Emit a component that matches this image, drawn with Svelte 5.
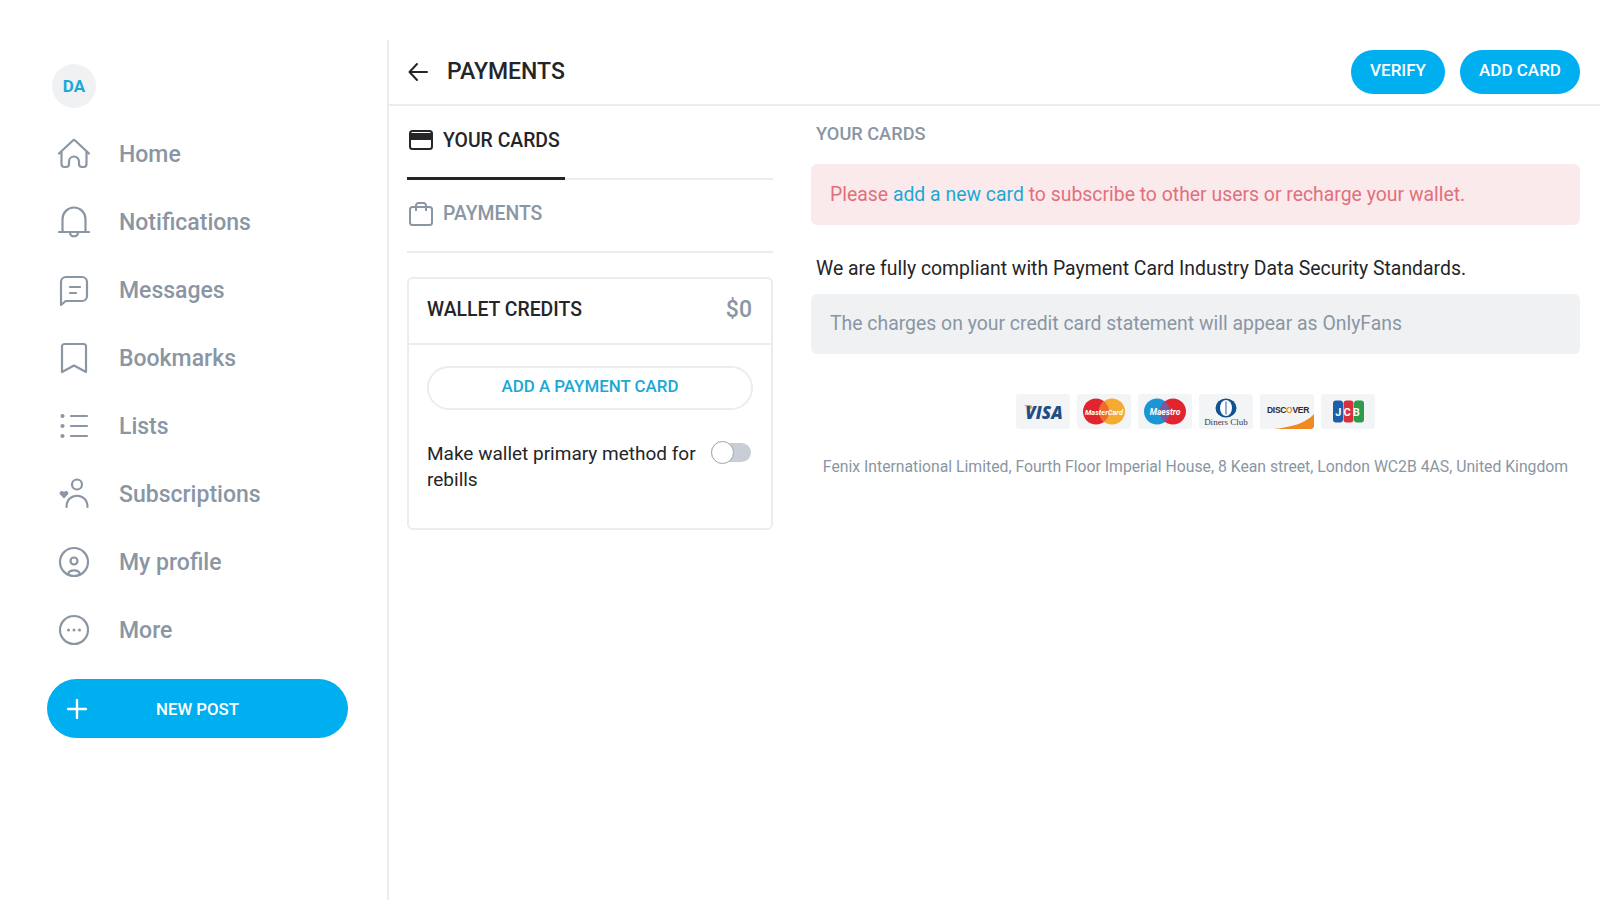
<script>
  const nav = [
    { label: 'Home', icon: 'home' },
    { label: 'Notifications', icon: 'bell' },
    { label: 'Messages', icon: 'msg' },
    { label: 'Bookmarks', icon: 'bookmark' },
    { label: 'Lists', icon: 'lists' },
    { label: 'Subscriptions', icon: 'subs' },
    { label: 'My profile', icon: 'profile' },
    { label: 'More', icon: 'more' }
  ]
  const footer = 'Fenix International Limited, Fourth Floor Imperial House, 8 Kean street, London WC2B 4AS, United Kingdom'
</script>

{#snippet navIcon(name)}
  <svg class="nav-icon" viewBox="0 0 32 32" fill="none" stroke="currentColor" stroke-width="2.2" stroke-linecap="round" stroke-linejoin="round">
    {#if name === 'home'}
      <path d="M1 15.5 15.2 2.2a1.2 1.2 0 0 1 1.6 0L31 15.5M3.5 13.5V26a3 3 0 0 0 3 3h1.5a3 3 0 0 0 3-3v-2.5a5 5 0 0 1 10 0V26a3 3 0 0 0 3 3h1.5a3 3 0 0 0 3-3V13.5" />
    {:else if name === 'bell'}
      <path d="M1 26h30M4.500 26V13a11.500 11.500 0 0 1 23 0v13M12 26.500c0 5 8 5 8 0" />
    {:else if name === 'msg'}
      <path d="M3 31V8a5 5 0 0 1 5-5h16a5 5 0 0 1 5 5v14a5 5 0 0 1-5 5H8.500a3 3 0 0 0-2.500 1.500ZM12 13h10M12 19h6" />
    {:else if name === 'bookmark'}
      <path d="M4 30V4.500A2.500 2.500 0 0 1 6.500 2h19A2.500 2.500 0 0 1 28 4.500V30L16 23.500Z" />
    {:else if name === 'lists'}
      <path d="M13 6h16M13 16h16M13 26h16" />
      <circle cx="4.500" cy="6" r="1" fill="currentColor" />
      <circle cx="4.500" cy="16" r="1" fill="currentColor" />
      <circle cx="4.500" cy="26" r="1" fill="currentColor" />
    {:else if name === 'subs'}
      <circle cx="19" cy="6.500" r="5" />
      <path d="M8.500 29c0-15 21-15 21 0" />
      <path d="M6 20.500 2.200 16.500c-2-2.300 1.600-5 3.800-2.500 2.200-2.500 5.800.2 3.800 2.500Z" fill="currentColor" stroke="none" />
    {:else if name === 'profile'}
      <circle cx="16" cy="16" r="14" />
      <circle cx="16" cy="15" r="3.500" />
      <path d="M10 28.500c1-5.500 11-5.500 12 0" />
    {:else}
      <circle cx="16" cy="16" r="14" />
      <circle cx="10.500" cy="16" r="1.500" fill="currentColor" stroke="none" />
      <circle cx="16" cy="16" r="1.500" fill="currentColor" stroke="none" />
      <circle cx="21.500" cy="16" r="1.500" fill="currentColor" stroke="none" />
    {/if}
  </svg>
{/snippet}

<div class="page">
  <aside class="sidebar">
    <div class="avatar">DA</div>
    <nav class="nav">
      {#each nav as item}
        <a class="nav-item" href="#top">
          {@render navIcon(item.icon)}
          <span>{item.label}</span>
        </a>
      {/each}
    </nav>
    <button class="new-post">
      <svg class="plus" viewBox="0 0 20 20" stroke="currentColor" stroke-width="2.400" stroke-linecap="round"><path d="M10 1v18M1 10h18" /></svg>
      <span>NEW POST</span>
    </button>
  </aside>

  <main class="main">
    <header class="topbar">
      <svg class="back" viewBox="0 0 20 20" fill="none" stroke="currentColor" stroke-width="2" stroke-linecap="round" stroke-linejoin="round"><path d="M19 10H1.500M9 2 1.500 10 9 18" /></svg>
      <h1>PAYMENTS</h1>
      <div class="actions">
        <button class="pill verify">VERIFY</button>
        <button class="pill add">ADD CARD</button>
      </div>
    </header>

    <div class="columns">
      <section class="left">
        <div class="tab active">
          <svg class="tab-icon" viewBox="0 0 24 20" fill="none" stroke="currentColor" stroke-width="2"><rect x="1" y="1" width="22" height="18" rx="2.500" /><rect x="1" y="4" width="22" height="5" fill="currentColor" /></svg>
          <span>YOUR CARDS</span>
        </div>
        <div class="tab">
          <svg class="tab-icon" viewBox="0 0 24 24" fill="none" stroke="currentColor" stroke-width="2"><rect x="1" y="5" width="22" height="18" rx="2.500" /><path d="M7 9V3.500A2.500 2.500 0 0 1 9.500 1h5A2.500 2.500 0 0 1 17 3.500V9" /></svg>
          <span>PAYMENTS</span>
        </div>

        <div class="wallet">
          <div class="wallet-head">
            <strong>WALLET CREDITS</strong>
            <span class="amount">$0</span>
          </div>
          <div class="wallet-body">
            <button class="outline">ADD A PAYMENT CARD</button>
            <div class="primary">
              <p>Make wallet primary method for rebills</p>
              <span class="toggle"><span class="knob"></span></span>
            </div>
          </div>
        </div>
      </section>

      <section class="right">
        <h2>YOUR CARDS</h2>
        <div class="alert">Please <a href="#top">add a new card</a> to subscribe to other users or recharge your wallet.</div>
        <p class="compliant">We are fully compliant with Payment Card Industry Data Security Standards.</p>
        <div class="note">The charges on your credit card statement will appear as OnlyFans</div>

        <div class="cards">
          <div class="card-logo">
            <svg viewBox="0 0 54 34">
              <path d="M8 10.500h7l2 3-3 1Z" fill="#e8a33a" />
              <text x="28" y="24" text-anchor="middle" class="visa">VISA</text>
            </svg>
          </div>
          <div class="card-logo">
            <svg viewBox="0 0 54 34">
              <circle cx="19" cy="17" r="13" fill="#e0252f" />
              <circle cx="35" cy="17" r="13" fill="#f4ab32" />
              <path d="M27 6.800a13 13 0 0 1 0 20.400 13 13 0 0 1 0-20.400Z" fill="#ee6b2c" />
              <text x="27" y="20" text-anchor="middle" class="mc small">MasterCard</text>
            </svg>
          </div>
          <div class="card-logo">
            <svg viewBox="0 0 54 34">
              <circle cx="19" cy="17" r="13" fill="#1b96d4" />
              <circle cx="35" cy="17" r="13" fill="#e0252f" />
              <path d="M27 6.800a13 13 0 0 1 0 20.400 13 13 0 0 1 0-20.400Z" fill="#7a5a9c" />
              <text x="27" y="20" text-anchor="middle" class="mc">Maestro</text>
            </svg>
          </div>
          <div class="card-logo">
            <svg viewBox="0 0 54 34">
              <ellipse cx="27" cy="13.500" rx="10.500" ry="9.500" fill="#11518f" />
              <ellipse cx="27" cy="13.500" rx="6" ry="8" fill="#fff" />
              <rect x="26.300" y="7" width="1.400" height="13" fill="#5d8fc0" />
              <text x="27" y="30" text-anchor="middle" class="diners">Diners Club</text>
            </svg>
          </div>
          <div class="card-logo">
            <svg viewBox="0 0 54 35">
              <path d="M14 35C32 33 46 29 54 20v12a3 3 0 0 1-3 3Z" fill="#ef8a22" />
              <text x="28" y="19" text-anchor="middle" class="discover">DISC<tspan fill="#ef8a22">O</tspan>VER</text>
            </svg>
          </div>
          <div class="card-logo">
            <svg viewBox="0 0 54 34">
              <rect x="12" y="6" width="10" height="22" rx="3" fill="#1c5fa8" />
              <rect x="22.500" y="6" width="10" height="22" rx="3" fill="#d8303e" />
              <rect x="33" y="6" width="10" height="22" rx="3" fill="#2c9b4a" />
              <text x="27.500" y="21" text-anchor="middle" class="jcb">JCB</text>
            </svg>
          </div>
        </div>

        <p class="address">{footer}</p>
      </section>
    </div>
  </main>
</div>

<style>
  :global(body) {
    margin: 0;
    background: #fff;
  }

  .page {
    display: flex;
    height: 860px;
    margin-top: 40px;
    font-family: Roboto, "Liberation Sans", sans-serif;
    color: #242529;
    overflow: hidden;
  }

  button {
    font-family: inherit;
    border: 0;
    cursor: pointer;
  }

  /* sidebar */
  .sidebar {
    width: 389px;
    flex: none;
    box-sizing: border-box;
    border-right: 2px solid #eaecee;
    padding: 24px 0 0 47px;
  }

  .avatar {
    width: 44px;
    height: 44px;
    margin-left: 5px;
    border-radius: 50%;
    background: #f0f1f3;
    color: #1ba8d5;
    font-size: 17px;
    font-weight: 700;
    display: flex;
    align-items: center;
    justify-content: center;
  }

  .nav {
    display: grid;
    grid-auto-rows: 68px;
    margin-top: 12px;
  }

  .nav-item {
    display: flex;
    align-items: center;
    gap: 29px;
    padding-left: 11px;
    color: #8a96a3;
    text-decoration: none;
    font-size: 23px;
    font-weight: 500;
  }

  .nav-icon {
    width: 32px;
    height: 32px;
    flex: none;
  }

  .new-post {
    display: grid;
    grid-template-columns: 1fr auto 1fr;
    align-items: center;
    width: 301px;
    height: 59px;
    margin-top: 15px;
    padding: 0 20px;
    border-radius: 30px;
    background: #00aff0;
    color: #fff;
    font-size: 16.800px;
    font-weight: 500;
  }

  .plus {
    width: 20px;
    height: 20px;
  }

  /* main column */
  .main {
    flex: 1;
    min-width: 0;
  }

  .topbar {
    display: flex;
    align-items: center;
    height: 66px;
    box-sizing: border-box;
    border-bottom: 2px solid #eaecee;
    padding: 0 20px 0 19px;
  }

  .back {
    width: 20px;
    height: 20px;
    color: #242529;
  }

  h1 {
    margin: 0 0 2px 19px;
    font-size: 23px;
    font-weight: 500;
  }

  .actions {
    margin-left: auto;
    display: flex;
    gap: 15px;
  }

  .pill {
    height: 44px;
    border-radius: 22px;
    background: #00aff0;
    color: #fff;
    font-size: 17px;
    font-weight: 500;
    padding: 0 0 4px;
  }

  .verify {
    width: 94px;
  }

  .add {
    width: 120px;
  }

  .columns {
    display: flex;
    padding: 0 20px 0 18px;
    gap: 38px;
  }

  /* left column */
  .left {
    width: 366px;
    flex: none;
  }

  .tab {
    display: flex;
    align-items: center;
    gap: 10px;
    height: 73px;
    box-sizing: border-box;
    padding: 0 0 4px 2px;
    border-bottom: 2px solid #eaecee;
    color: #8a96a3;
    font-size: 19.400px;
    font-weight: 500;
    position: relative;
  }

  .tab.active {
    color: #242529;
    height: 74px;
  }

  .tab.active::after {
    content: "";
    position: absolute;
    left: 0;
    bottom: -2px;
    width: 158px;
    height: 3px;
    background: #242529;
  }

  .tab-icon {
    width: 24px;
    height: 24px;
  }

  .wallet {
    margin-top: 24px;
    height: 253px;
    box-sizing: border-box;
    border: 2px solid #eaecee;
    border-radius: 6px;
  }

  .wallet-head {
    display: flex;
    justify-content: space-between;
    align-items: center;
    height: 66px;
    box-sizing: border-box;
    padding: 0 19px 4px 18px;
    border-bottom: 2px solid #eaecee;
  }

  .wallet-head strong {
    font-size: 19.400px;
    font-weight: 500;
  }

  .amount {
    font-size: 23px;
    font-weight: 500;
    color: #8a96a3;
  }

  .wallet-body {
    padding: 21px 18px 0;
  }

  .outline {
    display: block;
    width: 100%;
    height: 44px;
    border: 2px solid #eaecee;
    border-radius: 22px;
    background: #fff;
    color: #1ba8d5;
    font-size: 16.900px;
    font-weight: 500;
    padding: 0 0 4px;
  }

  .primary {
    display: flex;
    justify-content: space-between;
    gap: 10px;
    margin-top: 31px;
  }

  .primary p {
    margin: 0;
    font-size: 19px;
    line-height: 26px;
  }

  .toggle {
    position: relative;
    flex: none;
    width: 40px;
    height: 19px;
    margin: 2px 2px 0 0;
    border-radius: 10px;
    background: #c9ced6;
  }

  .knob {
    position: absolute;
    left: 0;
    top: -2px;
    width: 23px;
    height: 23px;
    box-sizing: border-box;
    border: 1.500px solid #9aa3ad;
    border-radius: 50%;
    background: #fff;
  }

  /* right column */
  .right {
    flex: 1;
    min-width: 0;
  }

  h2 {
    margin: 16px 0 0 5px;
    color: #8a96a3;
    font-size: 18.200px;
    font-weight: 500;
    line-height: 24px;
  }

  .alert,
  .note {
    display: flex;
    align-items: center;
    white-space: pre-wrap;
    padding: 0 19px;
    border-radius: 6px;
    font-size: 19.400px;
  }

  .alert {
    height: 61px;
    margin-top: 18px;
    background: #fbeaec;
    color: #e0707c;
  }

  .alert a {
    color: #1ba8d5;
    text-decoration: none;
  }

  .compliant {
    margin: 32px 0 0 5px;
    font-size: 19.400px;
    line-height: 24px;
  }

  .note {
    height: 60px;
    box-sizing: border-box;
    padding-bottom: 2px;
    margin-top: 13px;
    background: #f0f1f3;
    color: #8a96a3;
  }

  .cards {
    display: flex;
    justify-content: center;
    gap: 7px;
    margin-top: 40px;
  }

  .card-logo {
    width: 54px;
    height: 35px;
    border-radius: 3px;
    background: #f3f4f6;
    overflow: hidden;
  }

  .card-logo svg {
    display: block;
    width: 54px;
    height: 35px;
  }

  .visa {
    font: italic 800 17px "Open Sans", sans-serif;
    fill: #1d4f86;
  }

  .mc {
    font: italic 700 8.500px Roboto, sans-serif;
    fill: #fff;
  }

  .mc.small {
    font-size: 7.400px;
  }

  .diners {
    font: 9px "Liberation Serif", serif;
    fill: #333c4a;
  }

  .discover {
    font: 800 8.500px "Liberation Sans", sans-serif;
    fill: #2a2d33;
    letter-spacing: -0.300px;
  }

  .jcb {
    font: 700 11px Roboto, sans-serif;
    fill: #fff;
    letter-spacing: 2px;
  }

  .address {
    margin: 26px 0 0;
    text-align: center;
    color: #8a96a3;
    font-size: 15.750px;
    line-height: 24px;
  }
</style>
